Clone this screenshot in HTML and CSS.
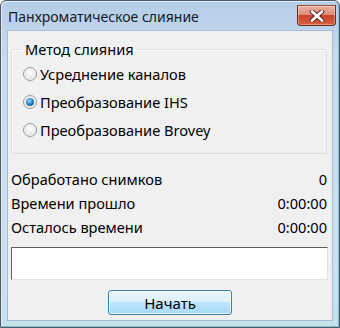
FILE: index.html
```html
<!DOCTYPE html>
<html lang="ru">
<head>
    <meta charset="UTF-8">
    <title>Панхроматическое слияние</title>
    <link rel="stylesheet" href="styles.css">
</head>
<body>
    <div class="window">
        <div class="titlebar">
            <span class="title">Панхроматическое слияние</span>
            <button class="close-btn" aria-label="Закрыть">
                <svg width="16" height="12" viewBox="0 0 16 12">
                    <path d="M3 1.5 L13 10.5 M13 1.5 L3 10.5" stroke="#5a1d12" stroke-width="4.6" stroke-linecap="round"/>
                    <path d="M3 1.5 L13 10.5 M13 1.5 L3 10.5" stroke="#fff" stroke-width="2.8" stroke-linecap="round"/>
                </svg>
            </button>
        </div>
        <div class="client">
            <fieldset class="group">
                <legend>Метод слияния</legend>
                <label class="radio"><span class="dot"></span>Усреднение каналов</label>
                <label class="radio"><span class="dot checked"></span>Преобразование IHS</label>
                <label class="radio"><span class="dot"></span>Преобразование Brovey</label>
            </fieldset>
            <div class="stats">
                <div class="row"><span>Обработано снимков</span><span>0</span></div>
                <div class="row"><span>Времени прошло</span><span>0:00:00</span></div>
                <div class="row"><span>Осталось времени</span><span>0:00:00</span></div>
            </div>
            <div class="log"></div>
            <div class="actions">
                <button class="btn">Начать</button>
            </div>
        </div>
    </div>
</body>
</html>
```

FILE: styles.css
```css
* { box-sizing: border-box; }
body { margin: 0; width: 340px; height: 328px; font-family: "Noto Sans", "Open Sans", sans-serif; font-size: 14.6px; color: #000; background: #fff; }

.window { width: 340px; height: 328px; border: 1px solid #4d5966; border-radius: 6px 6px 0 0; background: linear-gradient(#b6cde8, #c9dbef 60px, #cde0f0 260px, #c4e2ea); box-shadow: inset -1px -1px 0 #7ec3cf, inset 1px 1px 0 #e3edf8; display: flex; flex-direction: column; padding: 0 6px 6px 6px; }

.titlebar { height: 29px; display: flex; align-items: flex-start; }
.title { font-size: 14px; color: #111b26; margin-top: 6px; margin-left: 1px; }
.close-btn { margin-left: auto; margin-top: 4px; margin-right: -3px; width: 39px; height: 21px; border: 1px solid #6e2a1d; border-top-color: #9a4a3a; border-radius: 0 0 4px 4px; background: linear-gradient(#eab1a4, #dd8d78 45%, #c8452a 50%, #d4603f); box-shadow: inset 0 0 0 1px rgba(255,255,255,0.35); display: flex; align-items: center; justify-content: center; padding: 0; }

.client { flex: 1; background: #f0f0f0; border: 1px solid #a7bcd3; padding: 0 5px 0 3px; display: flex; flex-direction: column; }

.group { margin: 8px 0 0 0; padding: 1px 0 9px 0; border: 1px solid #d5dfe5; border-radius: 3px; box-shadow: inset 1px 1px 0 #fff; }
.group legend { padding: 0 3px; margin-left: 10px; line-height: 20px; }

.radio { display: flex; align-items: center; height: 28px; padding-left: 11px; }
.dot { width: 14px; height: 14px; border-radius: 50%; border: 1px solid #9a9a9a; background: radial-gradient(circle at 50% 40%, #ffffff, #e6e6e6 65%, #cfcfcf); box-shadow: inset 0 0 0 1px #f4f4f4; margin-right: 3px; display: flex; align-items: center; justify-content: center; }
.dot.checked::after { content: ""; width: 8px; height: 8px; border-radius: 50%; background: radial-gradient(circle at 40% 35%, #9ad8ff, #1f7ac8 55%, #0a4785); }

.stats { margin-top: 13px; }
.row { display: flex; justify-content: space-between; align-items: center; height: 24px; }

.log { margin-top: 8px; height: 33px; background: #fff; border: 1px solid #e3e3e3; border-top-color: #5f5f5f; border-left-color: #5f5f5f; margin-right: -1px; }

.actions { display: flex; justify-content: center; margin-top: 10px; padding-left: 2px; }
.btn { width: 124px; height: 25px; font: inherit; font-size: 15px; color: #000; border: 1px solid #3c7fb1; border-radius: 3px; background: linear-gradient(#eaf6fd, #d9f0fc 50%, #bee6fd 50%, #a7d9f5); box-shadow: inset 0 0 0 1px rgba(255,255,255,0.7); padding: 0; }
```
